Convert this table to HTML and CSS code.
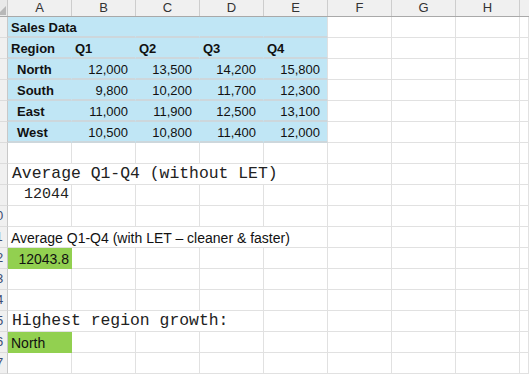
FILE: index.html
```html
<!DOCTYPE html>
<html>
<head>
<meta charset="utf-8">
<link rel="stylesheet" href="styles.css">
</head>
<body>
<div class="sheet">
  <div class="row head">
    <div class="corner"><div class="tri"></div></div>
    <div class="ch">A</div><div class="ch">B</div><div class="ch">C</div><div class="ch">D</div>
    <div class="ch">E</div><div class="ch">F</div><div class="ch">G</div><div class="ch">H</div>
    <div class="ch fill"></div>
  </div>

  <div class="row">
    <div class="rh"><span>1</span></div>
    <div class="c w2 blue b">Sales Data</div>
    <div class="c blue"></div><div class="c blue"></div><div class="c blue last"></div>
    <div class="c"></div><div class="c"></div><div class="c"></div><div class="c fill"></div>
  </div>
  <div class="row">
    <div class="rh"><span>2</span></div>
    <div class="c blue b">Region</div><div class="c blue b">Q1</div><div class="c blue b">Q2</div>
    <div class="c blue b">Q3</div><div class="c blue b last">Q4</div>
    <div class="c"></div><div class="c"></div><div class="c"></div><div class="c fill"></div>
  </div>
  <div class="row">
    <div class="rh"><span>3</span></div>
    <div class="c blue b ind">North</div><div class="c blue num">12,000</div><div class="c blue num">13,500</div>
    <div class="c blue num">14,200</div><div class="c blue num last">15,800</div>
    <div class="c"></div><div class="c"></div><div class="c"></div><div class="c fill"></div>
  </div>
  <div class="row">
    <div class="rh"><span>4</span></div>
    <div class="c blue b ind">South</div><div class="c blue num">9,800</div><div class="c blue num">10,200</div>
    <div class="c blue num">11,700</div><div class="c blue num last">12,300</div>
    <div class="c"></div><div class="c"></div><div class="c"></div><div class="c fill"></div>
  </div>
  <div class="row">
    <div class="rh"><span>5</span></div>
    <div class="c blue b ind">East</div><div class="c blue num">11,000</div><div class="c blue num">11,900</div>
    <div class="c blue num">12,500</div><div class="c blue num last">13,100</div>
    <div class="c"></div><div class="c"></div><div class="c"></div><div class="c fill"></div>
  </div>
  <div class="row">
    <div class="rh"><span>6</span></div>
    <div class="c blue b ind">West</div><div class="c blue num">10,500</div><div class="c blue num">10,800</div>
    <div class="c blue num">11,400</div><div class="c blue num last">12,000</div>
    <div class="c"></div><div class="c"></div><div class="c"></div><div class="c fill"></div>
  </div>
  <div class="row">
    <div class="rh"><span>7</span></div>
    <div class="c"></div><div class="c"></div><div class="c"></div><div class="c"></div>
    <div class="c"></div><div class="c"></div><div class="c"></div><div class="c"></div><div class="c fill"></div>
  </div>
  <div class="row">
    <div class="rh"><span>8</span></div>
    <div class="c w5 mono">Average Q1-Q4 (without LET)</div>
    <div class="c"></div><div class="c"></div><div class="c"></div><div class="c fill"></div>
  </div>
  <div class="row">
    <div class="rh"><span>9</span></div>
    <div class="c mono small r">12044</div><div class="c"></div><div class="c"></div><div class="c"></div>
    <div class="c"></div><div class="c"></div><div class="c"></div><div class="c"></div><div class="c fill"></div>
  </div>
  <div class="row">
    <div class="rh"><span>10</span></div>
    <div class="c"></div><div class="c"></div><div class="c"></div><div class="c"></div>
    <div class="c"></div><div class="c"></div><div class="c"></div><div class="c"></div><div class="c fill"></div>
  </div>
  <div class="row">
    <div class="rh"><span>11</span></div>
    <div class="c w5 label">Average Q1-Q4 (with LET – cleaner &amp; faster)</div>
    <div class="c"></div><div class="c"></div><div class="c"></div><div class="c fill"></div>
  </div>
  <div class="row">
    <div class="rh"><span>12</span></div>
    <div class="c green label r">12043.8</div><div class="c"></div><div class="c"></div><div class="c"></div>
    <div class="c"></div><div class="c"></div><div class="c"></div><div class="c"></div><div class="c fill"></div>
  </div>
  <div class="row">
    <div class="rh"><span>13</span></div>
    <div class="c"></div><div class="c"></div><div class="c"></div><div class="c"></div>
    <div class="c"></div><div class="c"></div><div class="c"></div><div class="c"></div><div class="c fill"></div>
  </div>
  <div class="row">
    <div class="rh"><span>14</span></div>
    <div class="c"></div><div class="c"></div><div class="c"></div><div class="c"></div>
    <div class="c"></div><div class="c"></div><div class="c"></div><div class="c"></div><div class="c fill"></div>
  </div>
  <div class="row">
    <div class="rh"><span>15</span></div>
    <div class="c w4 mono">Highest region growth:</div>
    <div class="c"></div><div class="c"></div><div class="c"></div><div class="c"></div><div class="c fill"></div>
  </div>
  <div class="row">
    <div class="rh"><span>16</span></div>
    <div class="c green label">North</div><div class="c"></div><div class="c"></div><div class="c"></div>
    <div class="c"></div><div class="c"></div><div class="c"></div><div class="c"></div><div class="c fill"></div>
  </div>
  <div class="row">
    <div class="rh"><span>17</span></div>
    <div class="c"></div><div class="c"></div><div class="c"></div><div class="c"></div>
    <div class="c"></div><div class="c"></div><div class="c"></div><div class="c"></div><div class="c fill"></div>
  </div>
</div>
</body>
</html>
```
FILE: styles.css
```css
* { box-sizing: border-box; }
html, body { margin: 0; padding: 0; background: #fff; overflow: hidden; }
body { font-family: "Liberation Sans", Arial, sans-serif; font-size: 13px; color: #111; }

.sheet { width: 529px; height: 375px; overflow: hidden; }

.row { display: flex; height: 21px; }
.row.head { height: 17px; background: #f0f0f0; border-bottom: 1px solid #a9a9a9; }

.corner { width: 8px; flex: 0 0 8px; background: #e9e9e9; border-right: 1px solid #c8c8c8; position: relative; overflow: hidden; }
.tri { position: absolute; right: 1px; bottom: 1px; width: 0; height: 0;
  border-left: 9px solid transparent; border-bottom: 9px solid #b8b8b8; }

.ch { width: 64px; flex: 0 0 64px; border-right: 1px solid #cdcdcd; text-align: center;
  line-height: 16px; font-size: 13px; color: #333; }
.ch.fill { flex: 1 1 auto; width: auto; border-right: none; }

.rh { width: 8px; flex: 0 0 8px; background: #f0f0f0; border-right: 1px solid #c8c8c8;
  border-bottom: 1px solid #dcdcdc; overflow: hidden; display: flex; align-items: center; }
.rh span { flex: 0 0 30px; width: 30px; margin-left: -19px; text-align: center; font-size: 13px; color: #3b4c74; line-height: 20px; }

.c { width: 64px; flex: 0 0 64px; border-right: 1px solid #e1e1e1; border-bottom: 1px solid #e1e1e1;
  display: flex; align-items: flex-end; padding: 0 3px 1px 3px; white-space: nowrap; line-height: 16px; }
.c.fill { flex: 1 1 auto; width: auto; }
.w2 { width: 128px; flex-basis: 128px; }
.w4 { width: 256px; flex-basis: 256px; }
.w5 { width: 320px; flex-basis: 320px; }

.blue { background: #c0e6f5; border-right-color: #c0e6f5; border-bottom: 2px solid #cdd7dc; padding-bottom: 0; }
.blue.last { border-right-color: #e1e1e1; }
.b { font-weight: bold; }
.ind { padding-left: 9px; }
.num { justify-content: flex-end; padding-right: 7px; }
.r { justify-content: flex-end; padding-right: 2px; }

.mono { font-family: "Liberation Mono", "Courier New", monospace; font-size: 16.4px; color: #222; padding-left: 4px; padding-bottom: 2px; }
.mono.small { font-size: 15px; }
.label { font-size: 14px; }
.green { background: #92d050; border-right-color: #92d050; border-bottom-color: #92d050; }
```
